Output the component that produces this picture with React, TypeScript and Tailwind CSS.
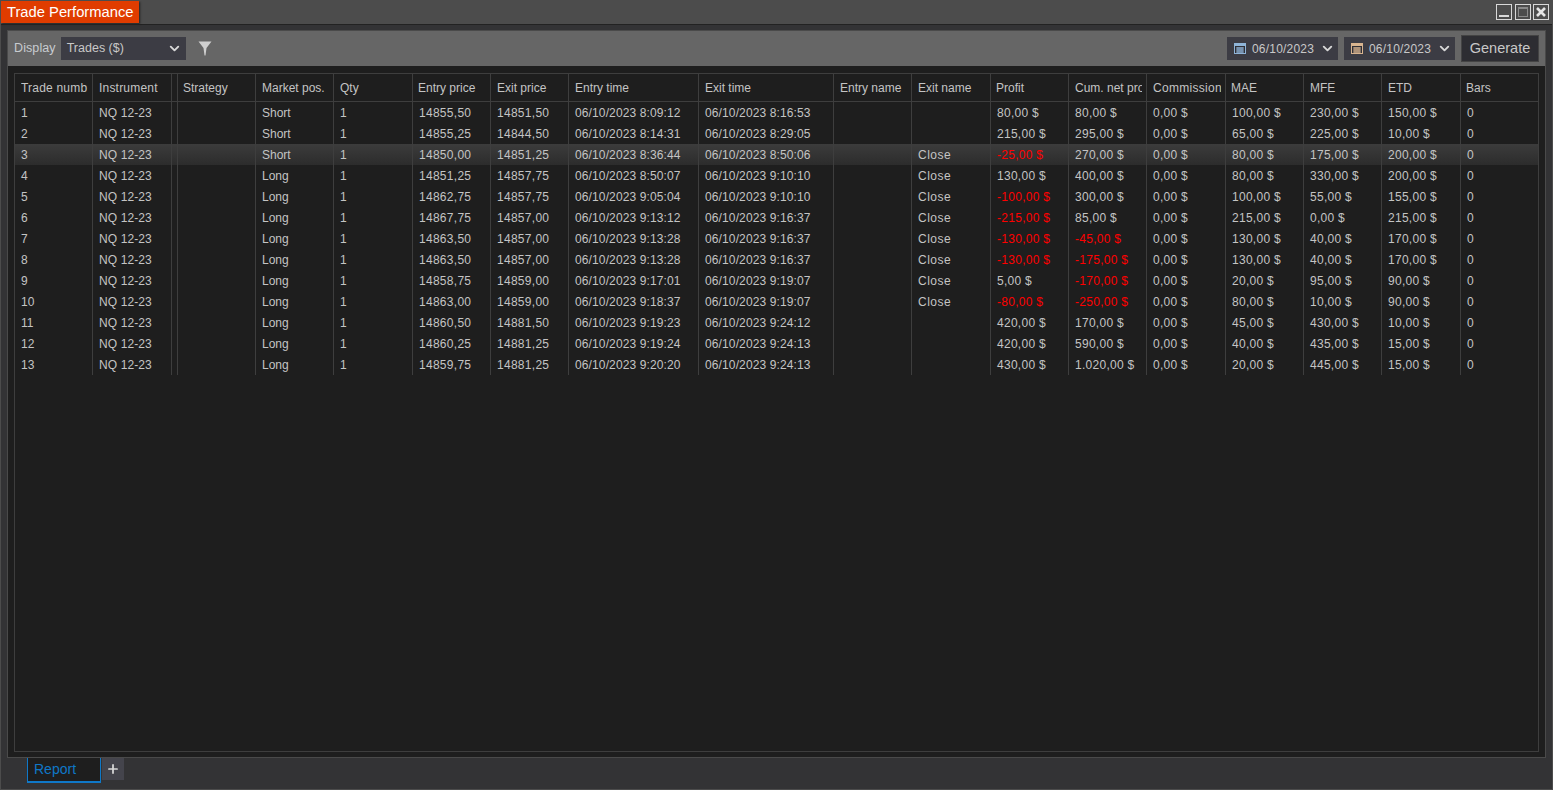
import { ChevronDown, Plus } from "lucide-react";

const columns = [
  { label: "Trade numb", width: 78, head: "pl-[6px] tracking-[0.2px]" },
  { label: "Instrument", width: 79, head: "pl-[6px] tracking-[0.2px]" },
  { label: "", width: 6, head: "pl-0" },
  { label: "Strategy", width: 78, head: "pl-[5px]" },
  { label: "Market pos.", width: 78, head: "pl-[6px]" },
  { label: "Qty", width: 79, head: "pl-[6px]" },
  { label: "Entry price", width: 78, head: "pl-[5px]" },
  { label: "Exit price", width: 78, head: "pl-[6px]" },
  { label: "Entry time", width: 130, head: "pl-[6px]" },
  { label: "Exit time", width: 135, head: "pl-[6px]" },
  { label: "Entry name", width: 78, head: "pl-[6px]" },
  { label: "Exit name", width: 79, head: "pl-[6px]" },
  { label: "Profit", width: 78, head: "pl-[5px]" },
  { label: "Cum. net profit", width: 78, head: "pl-[6px]" },
  { label: "Commission", width: 79, head: "pl-[6px] tracking-[0.3px]" },
  { label: "MAE", width: 78, head: "pl-[5px]" },
  { label: "MFE", width: 78, head: "pl-[6px]" },
  { label: "ETD", width: 79, head: "pl-[6px]" },
  { label: "Bars", width: 77, head: "pl-[5px]" },
];

const trades = [
  ["1", "NQ 12-23", "", "", "Short", "1", "14855,50", "14851,50", "06/10/2023 8:09:12", "06/10/2023 8:16:53", "", "", "80,00 $", "80,00 $", "0,00 $", "100,00 $", "230,00 $", "150,00 $", "0"],
  ["2", "NQ 12-23", "", "", "Short", "1", "14855,25", "14844,50", "06/10/2023 8:14:31", "06/10/2023 8:29:05", "", "", "215,00 $", "295,00 $", "0,00 $", "65,00 $", "225,00 $", "10,00 $", "0"],
  ["3", "NQ 12-23", "", "", "Short", "1", "14850,00", "14851,25", "06/10/2023 8:36:44", "06/10/2023 8:50:06", "", "Close", "-25,00 $", "270,00 $", "0,00 $", "80,00 $", "175,00 $", "200,00 $", "0"],
  ["4", "NQ 12-23", "", "", "Long", "1", "14851,25", "14857,75", "06/10/2023 8:50:07", "06/10/2023 9:10:10", "", "Close", "130,00 $", "400,00 $", "0,00 $", "80,00 $", "330,00 $", "200,00 $", "0"],
  ["5", "NQ 12-23", "", "", "Long", "1", "14862,75", "14857,75", "06/10/2023 9:05:04", "06/10/2023 9:10:10", "", "Close", "-100,00 $", "300,00 $", "0,00 $", "100,00 $", "55,00 $", "155,00 $", "0"],
  ["6", "NQ 12-23", "", "", "Long", "1", "14867,75", "14857,00", "06/10/2023 9:13:12", "06/10/2023 9:16:37", "", "Close", "-215,00 $", "85,00 $", "0,00 $", "215,00 $", "0,00 $", "215,00 $", "0"],
  ["7", "NQ 12-23", "", "", "Long", "1", "14863,50", "14857,00", "06/10/2023 9:13:28", "06/10/2023 9:16:37", "", "Close", "-130,00 $", "-45,00 $", "0,00 $", "130,00 $", "40,00 $", "170,00 $", "0"],
  ["8", "NQ 12-23", "", "", "Long", "1", "14863,50", "14857,00", "06/10/2023 9:13:28", "06/10/2023 9:16:37", "", "Close", "-130,00 $", "-175,00 $", "0,00 $", "130,00 $", "40,00 $", "170,00 $", "0"],
  ["9", "NQ 12-23", "", "", "Long", "1", "14858,75", "14859,00", "06/10/2023 9:17:01", "06/10/2023 9:19:07", "", "Close", "5,00 $", "-170,00 $", "0,00 $", "20,00 $", "95,00 $", "90,00 $", "0"],
  ["10", "NQ 12-23", "", "", "Long", "1", "14863,00", "14859,00", "06/10/2023 9:18:37", "06/10/2023 9:19:07", "", "Close", "-80,00 $", "-250,00 $", "0,00 $", "80,00 $", "10,00 $", "90,00 $", "0"],
  ["11", "NQ 12-23", "", "", "Long", "1", "14860,50", "14881,50", "06/10/2023 9:19:23", "06/10/2023 9:24:12", "", "", "420,00 $", "170,00 $", "0,00 $", "45,00 $", "430,00 $", "10,00 $", "0"],
  ["12", "NQ 12-23", "", "", "Long", "1", "14860,25", "14881,25", "06/10/2023 9:19:24", "06/10/2023 9:24:13", "", "", "420,00 $", "590,00 $", "0,00 $", "40,00 $", "435,00 $", "15,00 $", "0"],
  ["13", "NQ 12-23", "", "", "Long", "1", "14859,75", "14881,25", "06/10/2023 9:20:20", "06/10/2023 9:24:13", "", "", "430,00 $", "1.020,00 $", "0,00 $", "20,00 $", "445,00 $", "15,00 $", "0"],
];

// numbers are a little wider in the original font rendering
function cellClass(cell: string, col: number) {
  const red = cell.startsWith("-") ? "text-[#ff0000] " : "";
  let spacing = "";
  if (col === 8 || col === 9) spacing = "tracking-[0.12px] ";
  else if (col === 1) spacing = "tracking-[0.1px] ";
  else if (col === 11) spacing = "tracking-[0.5px] ";
  else if (col >= 6 && /\d/.test(cell)) spacing = "tracking-[0.28px] ";
  return red + spacing + "overflow-hidden whitespace-nowrap border-r border-[#3e3e3e] p-0 pl-[6px] last:border-r-0";
}

function CalendarIcon({ tint }: { tint: string }) {
  return (
    <svg width="12" height="11" viewBox="0 0 12 11" className="shrink-0">
      <rect x="0.5" y="0.5" width="11" height="10" fill="#2f2f36" stroke={tint} />
      <rect x="0" y="0" width="12" height="3" fill={tint} />
      <path d="M2 5h8M2 7h8M2 9h8M4 4v6M6 4v6M8 4v6" stroke={tint} strokeWidth="1" />
    </svg>
  );
}

function DatePicker({ tint }: { tint: string }) {
  return (
    <div className="flex h-[23px] w-[111px] items-center bg-[#3c3c44] pl-[7px] text-[#c8c8c8]">
      <CalendarIcon tint={tint} />
      <span className="ml-[6px] text-[12px] tracking-[0.2px]">06/10/2023</span>
      <ChevronDown size={15} strokeWidth={3} className="ml-auto mr-[3px] text-[#d8d8d8]" />
    </div>
  );
}

export default function App() {
  return (
    <div className="flex h-[790px] w-[1553px] flex-col overflow-hidden border border-[#4c4c4c] bg-[#333335] font-['Liberation_Sans',Arial,sans-serif] text-[12px] text-[#c4c4c4]">
      {/* title bar */}
      <div className="flex h-[23px] shrink-0 items-start justify-between bg-[#4c4c4c] shadow-[0_1px_0_#222]">
        <div className="flex h-[22px] w-[138px] items-center bg-[#e03c00] pl-[6px] text-[14.75px] text-white shadow-[1px_1px_2px_#222]">
          Trade Performance
        </div>
        <div className="mt-[3px] flex gap-[2px] pr-[3px]">
          <div className="mr-[1px] flex h-[16px] w-[16px] items-end justify-center border border-[#d8d8d8] pb-[2px]">
            <div className="h-[2px] w-[10px] bg-[#d8d8d8]" />
          </div>
          <div className="h-[16px] w-[16px] border border-[#d8d8d8] p-[2px]">
            <div className="h-full w-full border border-t-2 border-[#8a8a8a]" />
          </div>
          <div className="flex h-[16px] w-[16px] items-center justify-center border border-[#d8d8d8]">
            <svg width="12" height="12" viewBox="0 0 12 12">
              <path d="M2 2l8 8M10 2l-8 8" stroke="#e4e4e4" strokeWidth="2.6" />
            </svg>
          </div>
        </div>
      </div>

      <div className="mx-[6px] mt-[6px] flex min-h-0 flex-1 flex-col border border-[#4a4a4a] bg-[#1e1e1e]">
        {/* toolbar */}
        <div className="flex h-[35px] shrink-0 items-center bg-[#666666] pl-[6px] pr-[6px]">
          <span className="text-[12.5px] tracking-[0.1px] text-[#c8ccd0]">Display</span>
          <div className="ml-[5px] flex h-[23px] w-[125px] items-center bg-[#3c3c44] pl-[6px] text-[12.5px] text-[#c8c8c8]">
            Trades ($)
            <ChevronDown size={15} strokeWidth={3} className="ml-auto mr-[4px] text-[#d8d8d8]" />
          </div>
          <svg width="14" height="15" viewBox="0 0 14 15" className="ml-[12px]">
            <path d="M0.5 0.5h13L8.5 7L7.5 14.5H6.5L5.5 7z" fill="#cfcfcf" />
          </svg>
          <div className="ml-auto flex items-center gap-[6px]">
            <DatePicker tint="#8fb4d8" />
            <DatePicker tint="#d8b48f" />
            <div className="flex h-[27px] w-[78px] items-center justify-center border border-[#444] bg-[#2d2d32] text-[14.5px] text-[#c8c8c8]">
              Generate
            </div>
          </div>
        </div>

        {/* grid */}
        <div className="flex min-h-0 flex-1 flex-col px-[6px] pb-[5px] pt-[7px]">
          <div className="min-h-0 flex-1 overflow-hidden border border-[#3e3e3e]">
            <table className="w-[1523px] table-fixed border-separate border-spacing-0">
              <colgroup>
                {columns.map((col, i) => (
                  <col key={i} width={col.width} />
                ))}
              </colgroup>
              <thead>
                <tr className="h-[28px]">
                  {columns.map((col, i) => (
                    <th
                      key={i}
                      className={
                        col.head +
                        " border-b border-r border-[#3e3e3e] p-0 text-left font-normal text-[#c4c4c4] last:border-r-0"
                      }
                    >
                      <div className="mr-[4px] overflow-hidden whitespace-nowrap">{col.label}</div>
                    </th>
                  ))}
                </tr>
              </thead>
              <tbody>
                {trades.map((row, r) => (
                  <tr
                    key={r}
                    className={r === 2 ? "h-[21px] bg-gradient-to-b from-[#3c3c3c] to-[#2c2c2c]" : "h-[21px]"}
                  >
                    {row.map((cell, c) => (
                      <td key={c} className={cellClass(cell, c)}>
                        {cell}
                      </td>
                    ))}
                  </tr>
                ))}
              </tbody>
            </table>
          </div>
        </div>
      </div>

      {/* tabs */}
      <div className="flex h-[31px] shrink-0 items-start pl-[26px]">
        <div className="flex h-[25px] w-[74px] items-center border-x border-b-2 border-x-[#0f78c8] border-b-[#0f78c8] bg-[#1e1e1e] pl-[6px] text-[14px] text-[#0f78c8]">
          Report
        </div>
        <div className="ml-[1px] flex h-[22px] w-[22px] items-center justify-center bg-[#44444c] text-[#d8d8d8]">
          <Plus size={14} strokeWidth={3} />
        </div>
      </div>
    </div>
  );
}
